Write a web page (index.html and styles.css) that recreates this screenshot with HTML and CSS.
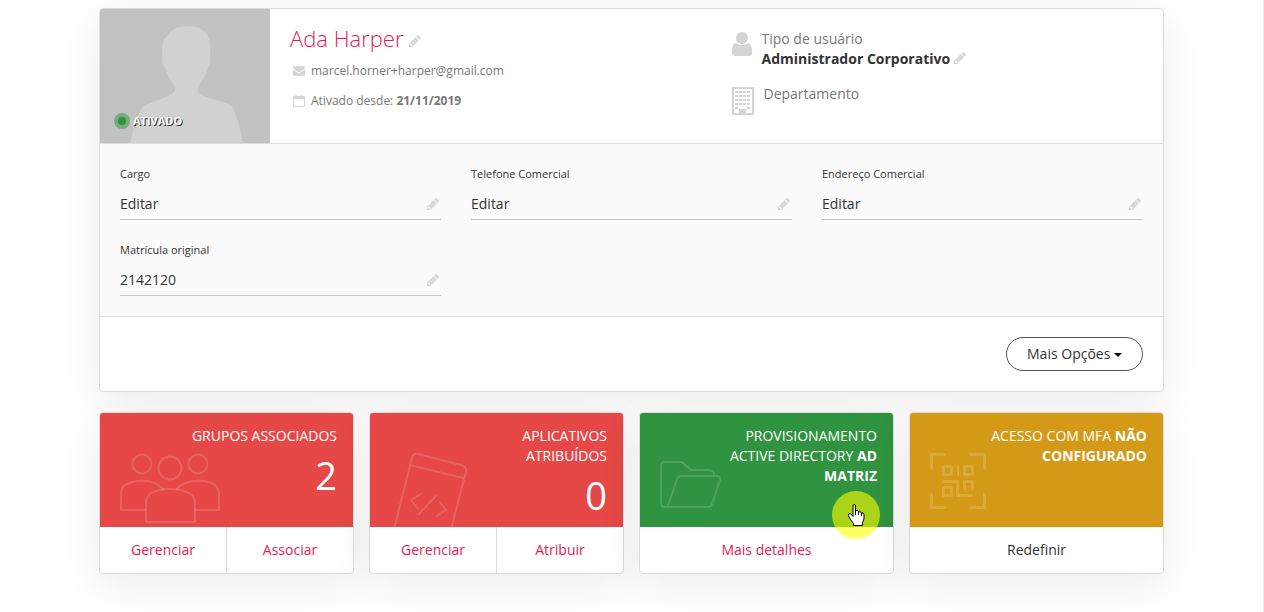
FILE: index.html
```html
<!DOCTYPE html>
<html lang="pt-BR">
<head>
  <meta charset="UTF-8">
  <meta name="viewport" content="width=device-width, initial-scale=1">
  <title>Ada Harper</title>
  <link rel="stylesheet" href="styles.css">
</head>
<body>

  <svg class="sprite" aria-hidden="true">
    <symbol id="pencil" viewBox="128 149 1515 1515">
      <path d="M491 1536l91-91-235-235-91 91v107h128v128h107zM960 416l416 416-832 832h-416v-416zm683 96q0 53-37 90l-166 166-416-416 166-165q36-38 90-38 53 0 91 38l235 234q37 39 37 91z"/>
    </symbol>
  </svg>

  <main class="page">

    <section class="card profile">
      <header class="profile-header">
        <div class="avatar">
          <svg viewBox="0 0 170 134" preserveAspectRatio="xMidYMax slice" aria-hidden="true">
            <path fill="#d1d1d1" d="M30 134 C33 122 37 109 41 100 Q43 97 48 95 L66 88 Q75 84 75 81 Q75 77 72 73 Q67 66 66 60 Q62 57 62 51 Q63 48 62 44 Q61 32 67 27 L70 23 Q77 17 85 17 Q103 16 109 29 Q111 38 110 44 L110 48 Q111 56 107 60 Q106 67 100 74 Q97 78 98 82 Q99 85 106 88 L126 94 Q132 96 134 101 Q140 116 143 134 Z"/>
          </svg>
          <span class="status">ATIVADO</span>
        </div>

        <div class="info">
          <h1>
            Ada Harper
            <button type="button" class="edit" aria-label="Editar nome"><svg><use href="#pencil"/></svg></button>
          </h1>
          <p>
            <svg viewBox="0 196 1792 1528" aria-hidden="true"><path d="M1792 710v794q0 66-47 113t-113 47h-1472q-66 0-113-47t-47-113v-794q44 49 101 87 362 246 497 345 57 42 92.500 65.500t94.500 48 110 24.500h2q51 0 110-24.500t94.500-48 92.500-65.500q170-123 498-345 57-39 100-87zm0-294q0 79-49 151t-122 123q-376 261-468 325-10 7-42.500 31t-54 38.500-52 32.500-57.500 27-50 9h-2q-23 0-50-9t-57.500-27-52-32.500-54-38.500-42.500-31q-91-64-262-182.500t-205-142.500q-62-42-117-115.500t-55-136.500q0-78 41.500-130t118.500-52h1472q65 0 112.500 47t47.500 113z"/></svg>
            <span>marcel.horner+harper@gmail.com</span>
          </p>
          <p>
            <svg viewBox="0 0 12 12" aria-hidden="true"><path fill-rule="evenodd" d="M1 1H2Q2 0 3 0T4 1H8Q8 0 9 0T10 1H11Q12 1 12 2V11Q12 12 11 12H1Q0 12 0 11V2Q0 1 1 1ZM1 4V11H11V4Z"/></svg>
            <span>Ativado desde: <strong>21/11/2019</strong></span>
          </p>
        </div>

        <div class="role">
          <div class="role-item">
            <svg viewBox="0 0 20 24" width="20" height="24" aria-hidden="true">
              <circle cx="10" cy="6" r="6"/>
              <path d="M3 11Q4 11 5 11.500Q10 15 15 11.500Q16 11 17 11Q20 13 20 19V21Q20 24 17 24H3Q0 24 0 21V19Q0 13 3 11Z"/>
            </svg>
            <div>
              <span>Tipo de usuário</span>
              <strong>Administrador Corporativo
                <button type="button" class="edit" aria-label="Editar tipo de usuário"><svg><use href="#pencil"/></svg></button></strong>
            </div>
          </div>
          <div class="role-item">
            <svg viewBox="0 0 22 28" width="22" height="28" aria-hidden="true">
              <path fill-rule="evenodd" d="M0 0H22V28H0ZM2 2V26H7V22H14V26H20V2Z"/>
              <path fill="none" stroke="#d4d4d4" stroke-width="2" stroke-dasharray="3 1" d="M3 5H19M3 9H19M3 13H19M3 17H19M3 21H6M15 21H18"/>
            </svg>
            <div><span>Departamento</span></div>
          </div>
        </div>
      </header>

      <form class="fields">
        <div class="field">
          <label for="cargo">Cargo</label>
          <div class="field-row">
            <input type="text" id="cargo" value="Editar">
            <button type="button" class="edit" aria-label="Editar cargo"><svg><use href="#pencil"/></svg></button>
          </div>
        </div>
        <div class="field">
          <label for="telefone">Telefone Comercial</label>
          <div class="field-row">
            <input type="text" id="telefone" value="Editar">
            <button type="button" class="edit" aria-label="Editar telefone"><svg><use href="#pencil"/></svg></button>
          </div>
        </div>
        <div class="field">
          <label for="endereco">Endereço Comercial</label>
          <div class="field-row">
            <input type="text" id="endereco" value="Editar">
            <button type="button" class="edit" aria-label="Editar endereço"><svg><use href="#pencil"/></svg></button>
          </div>
        </div>
        <div class="field">
          <label for="matricula">Matrícula original</label>
          <div class="field-row">
            <input type="text" id="matricula" value="2142120">
            <button type="button" class="edit" aria-label="Editar matrícula"><svg><use href="#pencil"/></svg></button>
          </div>
        </div>
      </form>

      <footer class="profile-footer">
        <button type="button" class="btn-options">Mais Opções <span class="caret"></span></button>
      </footer>
    </section>

    <section class="stats">
      <article class="card stat">
        <div class="stat-top red">
          <svg class="stat-icon" viewBox="0 0 100 70" width="100" height="70" aria-hidden="true">
            <circle cx="22" cy="11" r="9.500"/>
            <circle cx="78" cy="11" r="9.500"/>
            <circle cx="50" cy="15" r="11.500"/>
            <path d="M25 57H1V40Q1 34 7 31Q14 27.500 22 27.500Q36 28 43 36"/>
            <path d="M75 57H99V40Q99 34 93 31Q86 27.500 78 27.500Q64 28 57 36"/>
            <path d="M26 69V50Q26 44 31 40Q39 36 50 36T69 40Q75 44 75 50V69Z"/>
          </svg>
          <h2>GRUPOS ASSOCIADOS</h2>
          <span class="number">2</span>
        </div>
        <div class="stat-links">
          <a href="#">Gerenciar</a>
          <a href="#">Associar</a>
        </div>
      </article>

      <article class="card stat">
        <div class="stat-top red">
          <svg class="stat-icon" viewBox="0 0 80 74" width="80" height="74" aria-hidden="true">
            <path d="M4 76L22 5Q23 0 28 1L71 12Q77 14 76 19L61 76M20 12L73 25"/>
            <path d="M31 41L21 47L28 56M46 43L29 61M50 49L56 57L47 63"/>
          </svg>
          <h2>APLICATIVOS ATRIBUÍDOS</h2>
          <span class="number">0</span>
        </div>
        <div class="stat-links">
          <a href="#">Gerenciar</a>
          <a href="#">Atribuir</a>
        </div>
      </article>

      <article class="card stat">
        <div class="stat-top green">
          <svg class="stat-icon" viewBox="0 0 64 60" width="64" height="60" aria-hidden="true">
            <path d="M54 22Q54 17 49 17H31L23 10Q21 9 20 9H5Q1 9 1 13V50Q1 54 5 54H48Q51 54 52 51L60 27Q61 23 57 23H22Q18 23 17 26L9 50Q8 54 5 54"/>
          </svg>
          <h2>PROVISIONAMENTO ACTIVE DIRECTORY <b>AD MATRIZ</b></h2>
        </div>
        <div class="stat-links">
          <a href="#">Mais detalhes</a>
        </div>
        <div class="pointer">
          <svg viewBox="0 0 17 22" width="17" height="22" aria-hidden="true">
            <path fill="#fff" stroke="#000" stroke-linejoin="round" d="M5.500 21.500V19.500L1.500 14Q0 11 .5 10Q2 9 3.500 10.500L5 12.500V2Q5 .5 6.300 .5T7.500 2V7.500Q8 6 9.500 6.500Q10.500 7 10.500 8Q12 6.800 13 8.500V9Q15.500 8 16 10.500V14Q16 16 14.500 18.500V21.500Z"/>
            <path fill="none" stroke="#000" d="M7.500 7V11M10.500 8V11M13.500 9V12"/>
          </svg>
        </div>
      </article>

      <article class="card stat">
        <div class="stat-top gold">
          <svg class="stat-icon qr" viewBox="0 0 56 56" width="56" height="56" aria-hidden="true">
            <path d="M15 1.500H1.500V15M41 1.500H54.500V15M1.500 41V54.500H15M54.500 41V54.500H41"/>
            <path d="M13.500 13.500H21.500V21.500H13.500ZM34.500 13.500H42.500V21.500H34.500ZM13.500 34.500H21.500V42.500H13.500ZM13.500 28.500H27.500V42.500H41.500M34.500 36V28.500H42.500V36"/>
            <path class="thin" d="M28 13V22"/>
          </svg>
          <h2>ACESSO COM MFA <b>NÃO CONFIGURADO</b></h2>
        </div>
        <div class="stat-links dark">
          <a href="#">Redefinir</a>
        </div>
      </article>
    </section>

  </main>

</body>
</html>
```
FILE: styles.css
```css
* { box-sizing: border-box; }
body {
  margin: 0;
  background: #fff;
  color: #333;
  font-family: "Open Sans", sans-serif;
  font-size: 14px;
  line-height: 20px;
}
h1, h2, p { margin: 0; font-weight: 400; }
button, input { font: inherit; color: inherit; }
a { color: #e6195a; text-decoration: none; }
a:hover { text-decoration: underline; }
.sprite { display: none; }

.page {
  min-height: 100vh;
  padding: 8px 99px 38px;
  border-right: 1px solid #ececec;
}
.card {
  background: #fff;
  border: 1px solid #dcdcdc;
  border-radius: 4px;
  box-shadow: 0 10px 40px rgba(0, 0, 0, 0.08);
}

.edit {
  display: inline-flex;
  padding: 0;
  border: 0;
  background: none;
  cursor: pointer;
}
.edit svg { width: 12px; height: 12px; fill: #d9d9d9; }

/* profile */
.profile-header {
  display: grid;
  grid-template-columns: 170px 1fr 1fr;
  min-height: 135px;
  border-bottom: 1px solid #dedede;
}
.avatar {
  position: relative;
  overflow: hidden;
  background: #c2c2c2;
  border-top-left-radius: 3px;
}
.avatar svg { display: block; width: 100%; height: 134px; }
.status {
  position: absolute;
  left: 14px;
  bottom: 12px;
  display: flex;
  align-items: center;
  gap: 3px;
  color: #fff;
  font-size: 11px;
  font-weight: 700;
  text-shadow: 1px 1px 0 #333;
}
.status::before {
  content: "";
  width: 8px;
  height: 8px;
  border: 4px solid #75ab7e;
  border-radius: 50%;
  background: #2f933f;
  box-sizing: content-box;
}

.info { padding: 15px 20px; }
.info h1 { color: #e6195a; font-size: 22px; font-weight: 300; line-height: 28px; margin-bottom: 9px; }
.info p {
  display: flex;
  align-items: center;
  gap: 6px;
  padding-left: 3px;
  color: #777;
  font-size: 12px;
}
.info p + p { margin-top: 10px; }
.info p svg { width: 12px; height: 12px; fill: #d4d4d4; }

.role { padding: 20px 15px; color: #777; }
.role-item { display: flex; gap: 10px; }
.role-item + .role-item { margin-top: 15px; }
.role-item > svg { margin-top: 3px; fill: #d4d4d4; }
.role-item span, .role-item strong { display: block; }
.role-item strong { color: #333; }

.fields {
  display: grid;
  grid-template-columns: repeat(3, 1fr);
  gap: 20px 30px;
  padding: 20px;
  background: #fbfbfb;
  border-bottom: 1px solid #dedede;
}
.field label { display: block; margin-bottom: 4px; font-size: 11px; }
.field-row {
  display: flex;
  align-items: center;
  height: 32px;
  padding-right: 2px;
  border-bottom: 1px solid #c4c4c4;
}
.field-row input {
  flex: 1;
  min-width: 0;
  padding: 0;
  border: 0;
  background: none;
  outline: none;
}

.profile-footer { display: flex; justify-content: flex-end; padding: 20px; }
.btn-options {
  height: 34px;
  padding: 0 20px;
  border: 1px solid #555;
  border-radius: 17px;
  background: #fff;
  cursor: pointer;
}
.caret {
  display: inline-block;
  border: 4px solid transparent;
  border-top-color: #000;
  border-bottom: 0;
  vertical-align: middle;
}

/* cards */
.stats {
  display: grid;
  grid-template-columns: repeat(4, 1fr);
  gap: 15px;
  margin-top: 20px;
}
.stat { position: relative; display: flex; flex-direction: column; overflow: hidden; }
.stat-top {
  position: relative;
  flex: 1;
  min-height: 114px;
  padding: 13px 16px 0 75px;
  overflow: hidden;
  color: #fff;
  text-align: right;
}
.stat-top h2 { font-size: 14px; line-height: 20px; }
.red { background: #e64747; }
.green { background: #2f933f; }
.gold { background: #d49a17; }
.number { display: block; font-size: 38px; line-height: 58px; }
.stat-icon {
  position: absolute;
  left: 20px;
  top: 40px;
  fill: none;
  stroke: rgba(255, 255, 255, 0.15);
  stroke-width: 2;
  stroke-linecap: round;
  stroke-linejoin: round;
}
.stat-icon.qr { stroke-width: 3; }
.stat-icon .thin { stroke-width: 2; }
.stat-links { display: flex; }
.stat-links a { flex: 1; padding: 13px 0; text-align: center; }
.stat-links a + a { border-left: 1px solid #dcdcdc; }
.stat-links.dark a { color: #333; }

.pointer {
  position: absolute;
  right: 13px;
  bottom: 34px;
  display: flex;
  align-items: center;
  justify-content: center;
  width: 48px;
  height: 48px;
  border-radius: 50%;
  background: rgba(255, 255, 0, 0.6);
}
```
